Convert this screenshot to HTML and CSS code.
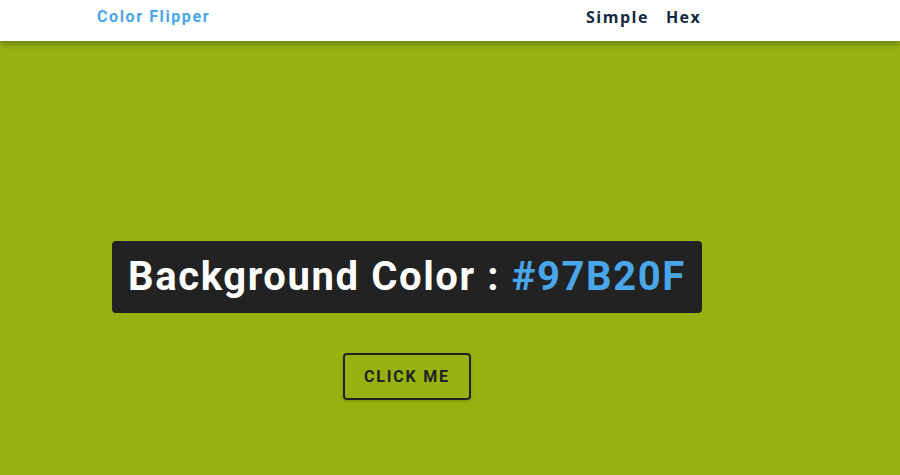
FILE: index.html
```html
<!DOCTYPE html>
<html lang="en">
<head>
<meta charset="UTF-8">
<title>Color Flipper</title>
<link rel="stylesheet" href="styles.css">
</head>
<body>
<nav class="nav">
  <div class="nav-center">
    <h4 class="logo">Color Flipper</h4>
    <ul class="nav-links">
      <li><a href="#">Simple</a></li>
      <li><a href="#">Hex</a></li>
    </ul>
  </div>
</nav>
<main class="main">
  <div class="container">
    <h2 class="title">Background Color : <span class="color">#97B20F</span></h2>
    <button class="btn" type="button">click me</button>
  </div>
</main>
</body>
</html>
```
FILE: styles.css
```css
* { box-sizing: border-box; margin: 0; padding: 0; }
html, body { height: 100%; }
body {
  background: #97b20f;
  font-family: Roboto, "Open Sans", sans-serif;
  overflow: hidden;
}
.nav {
  background: #fff;
  height: 41px;
  box-shadow: 0 3px 6px rgba(0, 0, 0, 0.3);
  position: relative;
  z-index: 1;
}
.nav-center {
  display: flex;
  align-items: center;
  height: 100%;
  padding-left: 97px;
  padding-bottom: 8px;
}
.logo {
  font-family: Roboto, sans-serif;
  font-weight: 700;
  font-size: 16px;
  letter-spacing: 1.6px;
  color: #49a6e9;
  width: 489px;
}
.nav-links {
  list-style: none;
  display: flex;
  gap: 17px;
}
.nav-links a {
  text-decoration: none;
  font-family: "Open Sans", sans-serif;
  font-weight: 700;
  font-size: 16px;
  letter-spacing: 1.5px;
  color: #102a42;
}
.main {
  height: calc(100% - 41px);
}
.container {
  width: 814px;
  display: flex;
  flex-direction: column;
  align-items: center;
  padding-top: 200px;
}
.title {
  background: #222;
  color: #fff;
  font-family: Roboto, sans-serif;
  font-weight: 700;
  font-size: 40px;
  letter-spacing: 1.6px;
  line-height: 1.2;
  padding: 12px 16px 12px;
  border-radius: 4px;
}
.color { color: #49a6e9; }
.btn {
  margin-top: 40px;
  width: 128px;
  height: 47px;
  background: transparent;
  border: 2px solid #222;
  border-radius: 4px;
  font-family: Roboto, sans-serif;
  font-weight: 700;
  font-size: 16px;
  letter-spacing: 1.8px;
  text-transform: uppercase;
  color: #222;
  box-shadow: 0 1px 3px rgba(0, 0, 0, 0.2);
}
```
